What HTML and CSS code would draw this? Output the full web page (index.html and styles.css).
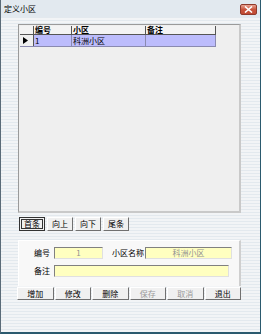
FILE: index.html
```html
<!DOCTYPE html>
<html>
<head>
<meta charset="utf-8">
<link rel="stylesheet" href="styles.css">
</head>
<body>
<div class="window">
  <div class="titlebar">
    <span class="title">定义小区</span>
    <span class="close"><svg width="9" height="7" viewBox="0 0 9 7"><path d="M1 0.5 L8 6.5 M8 0.5 L1 6.5" stroke="#fff" stroke-width="1.6"/></svg></span>
  </div>
  <div class="content">
    <div class="grid">
      <table class="data">
        <tr class="head"><th class="ind"></th><th class="c1">编号</th><th class="c2">小区</th><th class="c3">备注</th></tr>
        <tr class="sel"><td class="ind"><svg width="5" height="7" viewBox="0 0 5 7"><path d="M0 0 L5 3.5 L0 7Z" fill="#000"/></svg></td><td>1</td><td>科洲小区</td><td></td></tr>
      </table>
    </div>
    <div class="nav">
      <button class="btn first">首条</button>
      <button class="btn">向上</button>
      <button class="btn">向下</button>
      <button class="btn">尾条</button>
    </div>
    <div class="panel">
      <div class="row">
        <span class="lbl">编号</span>
        <span class="input w1 center">1</span>
        <span class="lbl l2">小区名称</span>
        <span class="input w2 center">科洲小区</span>
      </div>
      <div class="row">
        <span class="lbl">备注</span>
        <span class="input w3"></span>
      </div>
    </div>
    <div class="actions">
      <button class="btn big">增加</button>
      <button class="btn big">修改</button>
      <button class="btn big">删除</button>
      <button class="btn big dis">保存</button>
      <button class="btn big dis">取消</button>
      <button class="btn big">退出</button>
    </div>
  </div>
</div>
</body>
</html>
```

FILE: styles.css
```css
html, body {
  margin: 0;
  padding: 0;
}
body {
  font-family: "Noto Sans CJK SC", sans-serif;
  font-size: 8px;
  color: #000;
}
.window {
  width: 261px;
  height: 334px;
  box-sizing: border-box;
  border-left: 1px solid #5a6b78;
  border-right: 1px solid #2b5a6e;
  border-bottom: 2px solid #2b5a6e;
  background: repeating-linear-gradient(to bottom, #f2f4f6 0px, #f2f4f6 2px, #e3e9ee 2px, #e3e9ee 3px);
  display: flex;
  flex-direction: column;
}
.titlebar {
  height: 17px;
  display: flex;
  align-items: center;
  justify-content: space-between;
  padding: 0 3px 0 3px;
  background: #e2e9ef;
}
.title {
  font-size: 8px;
  line-height: 10px;
  margin-top: 1px;
}
.close {
  width: 17px;
  height: 11px;
  box-sizing: border-box;
  border: 1px solid #8f3a2c;
  border-radius: 2px;
  background: linear-gradient(#e9a493, #c9543d 50%, #c04a33);
  display: flex;
  align-items: center;
  justify-content: center;
  margin-top: 1px;
}
.content {
  padding: 7px 19px 0 17px;
}
.grid {
  height: 189px;
  box-sizing: border-box;
  border-top: 1px solid #9a9a9a;
  border-left: 1px solid #9a9a9a;
  border-right: 2px solid #c9c9c9;
  border-bottom: 2px solid #c9c9c9;
  background: #efefef;
  padding: 1px 0 0 1px;
}
.data {
  border-collapse: collapse;
  font-size: 8px;
}
.data th, .data td {
  padding: 0 1px;
  text-align: left;
  white-space: nowrap;
}
.data th {
  height: 8px;
  line-height: 8px;
  font-weight: bold;
  background: #f3f3f3;
  border-right: 1px solid #555;
  border-bottom: 1px solid #555;
}
.data th.ind { width: 11px; }
.data th.c1 { width: 35px; }
.data th.c2 { width: 71px; }
.data th.c3 { width: 67px; }
.data td {
  height: 11px;
  line-height: 11px;
  background: #bcbcfc;
  border-right: 1px solid #8a8ab0;
  border-bottom: 1px solid #8a8ab0;
}
.data td.ind {
  background: #efefef;
  border-right: 1px solid #555;
  padding-left: 3px;
}
.data td.ind svg { display: block; }
.nav {
  display: flex;
  gap: 2px;
  margin-top: 4px;
  margin-left: 1px;
}
.btn {
  font-family: "Noto Sans CJK SC", sans-serif;
  font-size: 8px;
  line-height: 10px;
  height: 14px;
  padding: 0;
  margin: 0;
  background: #f0f0f0;
  border-top: 1px solid #fff;
  border-left: 1px solid #fff;
  border-right: 1px solid #707070;
  border-bottom: 1px solid #707070;
  color: #000;
  width: 26px;
}
.btn.first {
  outline: 1px solid #333;
  outline-offset: -3px;
  border: 1px solid #333;
}
.panel {
  margin-top: 9px;
  height: 46px;
  box-sizing: border-box;
  background: #f8f8f8;
  border-top: 1px solid #fff;
  border-left: 1px solid #fff;
  border-right: 2px solid #cfcfcf;
  padding: 6px 0 0 15px;
  display: flex;
  flex-direction: column;
  gap: 6px;
}
.row {
  display: flex;
  align-items: center;
}
.lbl {
  width: 20px;
  line-height: 10px;
}
.lbl.l2 {
  width: auto;
  margin-left: 9px;
  margin-right: 1px;
}
.input {
  height: 12px;
  box-sizing: border-box;
  line-height: 10px;
  background: #ffffc0;
  border-top: 1px solid #808080;
  border-left: 1px solid #808080;
  border-right: 1px solid #e0e0e0;
  border-bottom: 1px solid #e0e0e0;
  color: #909090;
}
.center { text-align: center; }
.w1 { width: 49px; }
.w2 { width: 87px; }
.w3 { width: 175px; }
.actions {
  display: flex;
  gap: 1px;
  margin-top: 1px;
  margin-left: -1px;
}
.btn.big {
  width: 37px;
  height: 13px;
}
.btn.dis {
  color: #9a9a9a;
}
```
